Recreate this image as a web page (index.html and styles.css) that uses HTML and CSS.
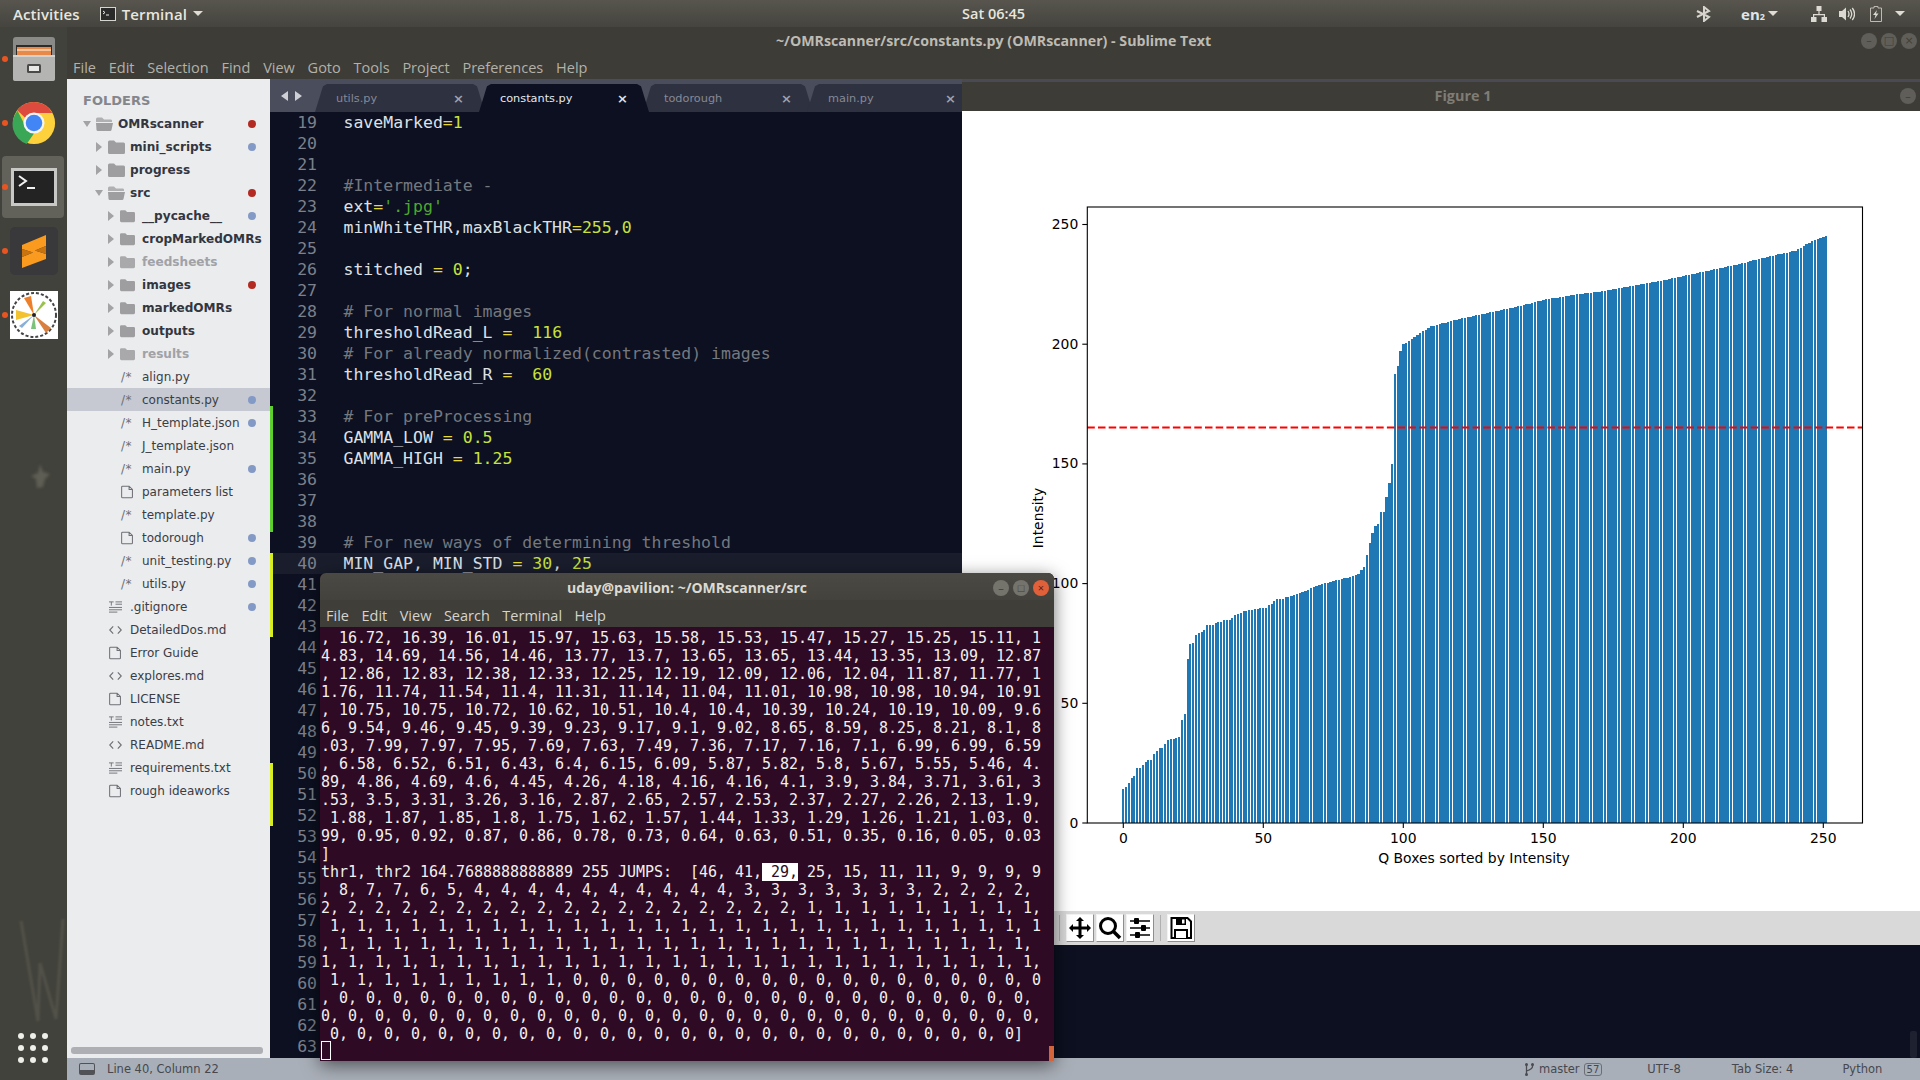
FILE: index.html
```html
<!DOCTYPE html>
<html lang="en">
<head>
<meta charset="utf-8">
<title>OMRscanner desktop</title>
<link rel="stylesheet" href="styles.css">
</head>
<body>
<svg class="defs" width="0" height="0">
  <symbol id="folder" viewBox="0 0 17 14"><path d="M0 2a1.500 1.500 0 0 1 1.500-1.500h4.500l2 2h7.500A1.500 1.500 0 0 1 17 4v8.500a1.500 1.500 0 0 1-1.500 1.500h-14A1.500 1.500 0 0 1 0 12.500z" fill="#9e9ea0"/></symbol>
  <symbol id="folder-open" viewBox="0 0 17 14"><path d="M0 2a1.500 1.500 0 0 1 1.500-1.500h4.500l2 2h7A1.500 1.500 0 0 1 16 4v1H0z" fill="#b0b0b2"/><path d="M0 6h17l-1.500 7a1.500 1.500 0 0 1-1.500 1H2a1.500 1.500 0 0 1-1.500-1z" fill="#9e9ea0"/></symbol>
  <symbol id="file" viewBox="0 0 14 14"><path d="M.7 1.700a1 1 0 0 1 1-1h7l3.600 3.600v8a1 1 0 0 1-1 1H1.700a1 1 0 0 1-1-1z M8.700.7v3.600h3.600" fill="none" stroke="#6d6f75" stroke-width="1.100"/></symbol>
  <symbol id="code" viewBox="0 0 14 14"><path d="M4.500 3L.8 7l3.700 4M9.500 3l3.700 4-3.700 4" fill="none" stroke="#6d6f75" stroke-width="1.200"/></symbol>
  <symbol id="lines" viewBox="0 0 14 14"><path d="M0 1.500h5M2.500 1.500v4M7 1.500h7M7 4h7M0 7.500h14M0 10h14M0 12.500h9" fill="none" stroke="#6d6f75" stroke-width="1"/></symbol>
  <symbol id="tri-r" viewBox="0 0 8 10"><path d="M1 0l6 5-6 5z" fill="#a3a3a5"/></symbol>
  <symbol id="tri-d" viewBox="0 0 8 10"><path d="M0 2h8l-4 6z" fill="#a3a3a5"/></symbol>
</svg>

<header class="topbar">
  <span class="top-title">Activities</span>
  <svg class="top-term" width="16" height="14" viewBox="0 0 16 14"><rect x=".5" y=".5" width="15" height="13" fill="#2a2a2a" stroke="#d5d5d0"/><path d="M3 4l2 1.500-2 1.500M6 8h3" stroke="#eee" fill="none"/></svg>
  <span class="top-title top-app">Terminal</span>
  <span class="caret"></span>
  <span class="top-clock">Sat 06:45</span>
  <div class="tray">
    <svg class="t-bt" width="16" height="16" viewBox="0 0 16 16"><path d="M1 5l12 6-5 4V1l5 4L1 11" fill="none" stroke="#d6d4cc" stroke-width="2"/></svg>
    <span class="t-lang">en<small>2</small></span>
    <span class="caret t-c1"></span>
    <svg class="t-net" width="16" height="16" viewBox="0 0 16 16"><path d="M5.500 0h5v5h-5zM0 11h5.500v5H0zM10.500 11H16v5h-5.500zM7.400 5h1.200v3H14v3h-1.200V9.200H3.200V11H2V8h5.400z" fill="#dcdad2"/></svg>
    <svg class="t-vol" width="16" height="14" viewBox="0 0 16 14"><path d="M0 4h3l4-3.500v13L3 10H0z" fill="#dcdad2"/><path d="M9 4q2 3 0 6M11 2.500q3.500 4.500 0 9M13.300 1q4.500 6 0 12" fill="none" stroke="#dcdad2" stroke-width="1.300"/></svg>
    <svg class="t-bat" width="12" height="16" viewBox="0 0 12 16"><path d="M4 .5h4v1.500h3.500v13.500H.5V2H4z" fill="none" stroke="#bdbbb3"/><path d="M7 4L3 9h2.500L4.500 13l4-5.500H6z" fill="#dcdad2"/></svg>
    <span class="caret t-c2"></span>
  </div>
</header>

<div class="desk">
  <nav class="dock">
    <div class="dock-item">
      <svg width="44" height="44" viewBox="0 0 44 44"><rect x="1" y="0" width="42" height="44" rx="3" fill="#8a8a88"/><rect x="4" y="8" width="36" height="12" fill="#2d2a28"/><rect x="5" y="10" width="34" height="10" fill="#e8894a"/><rect x="5" y="12" width="34" height="2" fill="#f4c59c"/><rect x="1" y="18" width="42" height="26" rx="2" fill="#b4b4b2"/><rect x="1" y="18" width="42" height="2" fill="#d2d2d0"/><rect x="15" y="27" width="14" height="9" rx="1.500" fill="#4a4a48"/><rect x="17" y="29" width="10" height="5" fill="#e8e8e6"/></svg>
      <i class="run"></i>
    </div>
    <div class="dock-item">
      <svg width="44" height="44" viewBox="0 0 48 48"><circle cx="24" cy="24" r="23" fill="#fdd13b"/><path d="M6 10.500L16 30l8 5.500 -8 11.500A23 23 0 0 1 6 10.500z" fill="#3aa757"/><path d="M24 1A23 23 0 0 1 44 13H24L14 18 5.700 10A23 23 0 0 1 24 1z" fill="#dd4b3e"/><circle cx="24" cy="24" r="11.500" fill="#f4f4f4"/><circle cx="24" cy="24" r="9" fill="#4285f4"/></svg>
      <i class="run"></i>
    </div>
    <div class="dock-item active">
      <svg width="46" height="38" viewBox="0 0 46 38"><rect x="0" y="0" width="46" height="38" fill="#c8c8c6"/><rect x="3" y="3" width="40" height="32" fill="#222322"/><path d="M8 8l7 5-7 5" fill="none" stroke="#f2f2f2" stroke-width="2"/><path d="M16 20h8" stroke="#f2f2f2" stroke-width="2"/></svg>
      <i class="run"></i>
    </div>
    <div class="dock-item">
      <svg width="48" height="48" viewBox="0 0 48 48"><rect width="48" height="48" rx="5" fill="#39383a"/><path d="M12 18L36 8v11L25 23.500 36 27v5L12 41V30l11-4.500L12 22z" fill="#fa9a1e"/><path d="M12 22l11 3.500L12 30zM36 19v8L25 23.500z" fill="#c9730f"/></svg>
      <i class="run"></i>
    </div>
    <div class="dock-item">
      <svg width="48" height="48" viewBox="0 0 48 48"><rect width="48" height="48" fill="#fff"/><circle cx="24" cy="24" r="22" fill="none" stroke="#444" stroke-width="2" stroke-dasharray="3 2"/><path d="M24 24L6 19v10z" fill="#f2c230"/><path d="M24 24L14 7l7-2z" fill="#ee7f2a"/><path d="M24 24L41 37l-5 5z" fill="#d98040"/><path d="M24 24l9-14 3 2z" fill="#9ac24a"/><path d="M24 24l-3 14 5 0z" fill="#7cc27a"/><path d="M24 24L9 35l3 2z" fill="#8ab0d8"/><circle cx="24" cy="24" r="2" fill="#222"/></svg>
      <i class="run"></i>
    </div>
    <svg class="ghost-star" width="24" height="28" viewBox="0 0 24 28"><path d="M11 2l3 8 7 2-5 5-2 8-6 1-1-9-5-3 7-3z" fill="#5e5e55"/></svg>
    <svg class="ghost-w" width="48" height="106" viewBox="0 0 48 106"><path d="M3 4l17 100L22 46l16 56L45 2" fill="none" stroke="#56564d" stroke-width="3"/></svg>
    <div class="apps"><i></i><i></i><i></i><i></i><i></i><i></i><i></i><i></i><i></i></div>
  </nav>

  <div class="sublime">
    <div class="win-title">
      <span class="win-name">~/OMRscanner/src/constants.py (OMRscanner) - Sublime Text</span>
      <span class="win-btns"><b class="wb">&#8211;</b><b class="wb">&#9633;</b><b class="wb">&#215;</b></span>
    </div>
    <div class="win-menu">
      <span>File</span><span>Edit</span><span>Selection</span><span>Find</span><span>View</span><span>Goto</span><span>Tools</span><span>Project</span><span>Preferences</span><span>Help</span>
    </div>
    <div class="panes">
      <aside class="side">
        <div class="side-head">FOLDERS</div>
        <div class="row l1 bold"><svg class="arrow"><use href="#tri-d"/></svg><svg class="fold"><use href="#folder-open"/></svg><span>OMRscanner</span><i class="dot red"></i></div>
        <div class="row l2 bold"><svg class="arrow"><use href="#tri-r"/></svg><svg class="fold"><use href="#folder"/></svg><span>mini_scripts</span><i class="dot blue"></i></div>
        <div class="row l2 bold"><svg class="arrow"><use href="#tri-r"/></svg><svg class="fold"><use href="#folder"/></svg><span>progress</span></div>
        <div class="row l2 bold"><svg class="arrow"><use href="#tri-d"/></svg><svg class="fold"><use href="#folder-open"/></svg><span>src</span><i class="dot red"></i></div>
        <div class="row l3 bold"><svg class="arrow"><use href="#tri-r"/></svg><svg class="fold"><use href="#folder"/></svg><span>__pycache__</span><i class="dot blue"></i></div>
        <div class="row l3 bold"><svg class="arrow"><use href="#tri-r"/></svg><svg class="fold"><use href="#folder"/></svg><span>cropMarkedOMRs</span></div>
        <div class="row l3 bold dim"><svg class="arrow"><use href="#tri-r"/></svg><svg class="fold"><use href="#folder"/></svg><span>feedsheets</span></div>
        <div class="row l3 bold"><svg class="arrow"><use href="#tri-r"/></svg><svg class="fold"><use href="#folder"/></svg><span>images</span><i class="dot red"></i></div>
        <div class="row l3 bold"><svg class="arrow"><use href="#tri-r"/></svg><svg class="fold"><use href="#folder"/></svg><span>markedOMRs</span></div>
        <div class="row l3 bold"><svg class="arrow"><use href="#tri-r"/></svg><svg class="fold"><use href="#folder"/></svg><span>outputs</span></div>
        <div class="row l3 bold dim"><svg class="arrow"><use href="#tri-r"/></svg><svg class="fold"><use href="#folder"/></svg><span>results</span></div>
        <div class="row f3"><em class="pyic">/*</em><span>align.py</span></div>
        <div class="row f3 sel"><em class="pyic">/*</em><span>constants.py</span><i class="dot blue"></i></div>
        <div class="row f3"><em class="pyic">/*</em><span>H_template.json</span><i class="dot blue"></i></div>
        <div class="row f3"><em class="pyic">/*</em><span>J_template.json</span></div>
        <div class="row f3"><em class="pyic">/*</em><span>main.py</span><i class="dot blue"></i></div>
        <div class="row f3"><svg class="ic"><use href="#file"/></svg><span>parameters list</span></div>
        <div class="row f3"><em class="pyic">/*</em><span>template.py</span></div>
        <div class="row f3"><svg class="ic"><use href="#file"/></svg><span>todorough</span><i class="dot blue"></i></div>
        <div class="row f3"><em class="pyic">/*</em><span>unit_testing.py</span><i class="dot blue"></i></div>
        <div class="row f3"><em class="pyic">/*</em><span>utils.py</span><i class="dot blue"></i></div>
        <div class="row f2"><svg class="ic"><use href="#lines"/></svg><span>.gitignore</span><i class="dot blue"></i></div>
        <div class="row f2"><svg class="ic"><use href="#code"/></svg><span>DetailedDos.md</span></div>
        <div class="row f2"><svg class="ic"><use href="#file"/></svg><span>Error Guide</span></div>
        <div class="row f2"><svg class="ic"><use href="#code"/></svg><span>explores.md</span></div>
        <div class="row f2"><svg class="ic"><use href="#file"/></svg><span>LICENSE</span></div>
        <div class="row f2"><svg class="ic"><use href="#lines"/></svg><span>notes.txt</span></div>
        <div class="row f2"><svg class="ic"><use href="#code"/></svg><span>README.md</span></div>
        <div class="row f2"><svg class="ic"><use href="#lines"/></svg><span>requirements.txt</span></div>
        <div class="row f2"><svg class="ic"><use href="#file"/></svg><span>rough ideaworks</span></div>
        <div class="side-scroll"></div>
      </aside>

      <section class="editor">
        <div class="tabs">
          <div class="tab-nav"><i class="nav-l"></i><i class="nav-r"></i></div>
          <div class="tab"><span>utils.py</span><b>&#215;</b></div>
          <div class="tab on"><span>constants.py</span><b>&#215;</b></div>
          <div class="tab"><span>todorough</span><b>&#215;</b></div>
          <div class="tab"><span>main.py</span><b>&#215;</b></div>
        </div>
        <div class="code">
          <div class="ln"><b>19</b><code>saveMarked<u>=</u><s>1</s></code></div>
          <div class="ln"><b>20</b></div>
          <div class="ln"><b>21</b></div>
          <div class="ln"><b>22</b><code><q>#Intermediate -</q></code></div>
          <div class="ln"><b>23</b><code>ext<u>=</u><var>'.jpg'</var></code></div>
          <div class="ln"><b>24</b><code>minWhiteTHR,maxBlackTHR<u>=</u><s>255</s>,<s>0</s></code></div>
          <div class="ln"><b>25</b></div>
          <div class="ln"><b>26</b><code>stitched <u>=</u> <s>0</s>;</code></div>
          <div class="ln"><b>27</b></div>
          <div class="ln"><b>28</b><code><q># For normal images</q></code></div>
          <div class="ln"><b>29</b><code>thresholdRead_L <u>=</u>  <s>116</s></code></div>
          <div class="ln"><b>30</b><code><q># For already normalized(contrasted) images</q></code></div>
          <div class="ln"><b>31</b><code>thresholdRead_R <u>=</u>  <s>60</s></code></div>
          <div class="ln"><b>32</b></div>
          <div class="ln gr"><b>33</b><code><q># For preProcessing</q></code></div>
          <div class="ln gr"><b>34</b><code>GAMMA_LOW <u>=</u> <s>0.5</s></code></div>
          <div class="ln gr"><b>35</b><code>GAMMA_HIGH <u>=</u> <s>1.25</s></code></div>
          <div class="ln gr"><b>36</b></div>
          <div class="ln gr"><b>37</b></div>
          <div class="ln gr"><b>38</b></div>
          <div class="ln"><b>39</b><code><q># For new ways of determining threshold</q></code></div>
          <div class="ln ye cur"><b>40</b><code>MIN_GAP, MIN_STD <u>=</u> <s>30</s>, <s>25</s></code></div>
          <div class="ln ye"><b>41</b></div>
          <div class="ln ye"><b>42</b></div>
          <div class="ln ye"><b>43</b></div>
          <div class="ln"><b>44</b></div>
          <div class="ln"><b>45</b></div>
          <div class="ln"><b>46</b></div>
          <div class="ln"><b>47</b></div>
          <div class="ln"><b>48</b></div>
          <div class="ln"><b>49</b></div>
          <div class="ln ye"><b>50</b></div>
          <div class="ln ye"><b>51</b></div>
          <div class="ln ye"><b>52</b></div>
          <div class="ln"><b>53</b></div>
          <div class="ln"><b>54</b></div>
          <div class="ln"><b>55</b></div>
          <div class="ln"><b>56</b></div>
          <div class="ln"><b>57</b></div>
          <div class="ln"><b>58</b></div>
          <div class="ln"><b>59</b></div>
          <div class="ln"><b>60</b></div>
          <div class="ln"><b>61</b></div>
          <div class="ln"><b>62</b></div>
          <div class="ln"><b>63</b></div>
        </div>
      </section>

      <section class="figure">
        <div class="fig-title"><span>Figure 1</span><b class="wb fig-min">&#8211;</b></div>
        <div class="fig-canvas">
          <svg id="chart" width="958" height="800" viewBox="0 0 958 800"></svg>
        </div>
        <div class="fig-tools">
          <i class="sep"></i>
          <span class="tool"><svg width="24" height="24" viewBox="0 0 24 24"><path d="M12 1l4 4h-2.500v5.500H19V8l4 4-4 4v-2.500h-5.500V19H16l-4 4-4-4h2.500v-5.500H5V16l-4-4 4-4v2.500h5.500V5H8z" fill="#000"/></svg></span>
          <span class="tool"><svg width="24" height="24" viewBox="0 0 24 24"><circle cx="10" cy="10" r="7.500" fill="none" stroke="#000" stroke-width="3"/><path d="M15.500 15.500L22 22" stroke="#000" stroke-width="3.500"/></svg></span>
          <span class="tool"><svg width="24" height="24" viewBox="0 0 24 24"><path d="M2 5h20M2 12h20M2 19h20" stroke="#000" stroke-width="1.500"/><rect x="6" y="2" width="5" height="6" rx="1" fill="#000"/><rect x="13" y="9" width="5" height="6" rx="1" fill="#000"/><rect x="7" y="16" width="5" height="6" rx="1" fill="#000"/></svg></span>
          <i class="sep sep2"></i>
          <span class="tool"><svg width="24" height="24" viewBox="0 0 24 24"><path d="M2.500 2h16l3.500 3.500v16.500h-19.500z" fill="#fff" stroke="#000" stroke-width="2"/><path d="M7 2h10v7H7z" fill="#000"/><rect x="13" y="3.500" width="2.500" height="4" fill="#fff"/><path d="M6 22v-8h12v8" fill="#fff" stroke="#000" stroke-width="2"/></svg></span>
        </div>
        <div class="fig-rest"><i class="mini-scroll"></i></div>
      </section>
    </div>
    <footer class="status">
      <span class="st-panel"></span>
      <span class="st-pos">Line 40, Column 22</span>
      <svg class="st-branch" width="9" height="13" viewBox="0 0 9 13"><path d="M1.500 1v11M7.500 1v2.500Q7.500 6 1.500 8" fill="none" stroke="#4a4c52" stroke-width="1.300"/><circle cx="1.500" cy="1.500" r="1.500" fill="#4a4c52"/><circle cx="7.500" cy="1.500" r="1.500" fill="#4a4c52"/><circle cx="1.500" cy="11.500" r="1.500" fill="#4a4c52"/></svg>
      <span class="st-master">master</span>
      <span class="st-badge">57</span>
      <span class="st-enc">UTF-8</span>
      <span class="st-tab">Tab Size: 4</span>
      <span class="st-lang">Python</span>
    </footer>
  </div>
</div>

<div class="terminal">
  <div class="term-title"><span>uday@pavilion: ~/OMRscanner/src</span>
    <span class="term-btns"><b class="tb">&#8211;</b><b class="tb">&#9633;</b><b class="tb close">&#215;</b></span>
  </div>
  <div class="term-menu"><span>File</span><span>Edit</span><span>View</span><span>Search</span><span>Terminal</span><span>Help</span></div>
  <pre class="term-body">, 16.72, 16.39, 16.01, 15.97, 15.63, 15.58, 15.53, 15.47, 15.27, 15.25, 15.11, 1
4.83, 14.69, 14.56, 14.46, 13.77, 13.7, 13.65, 13.65, 13.44, 13.35, 13.09, 12.87
, 12.86, 12.83, 12.38, 12.33, 12.25, 12.19, 12.09, 12.06, 12.04, 11.87, 11.77, 1
1.76, 11.74, 11.54, 11.4, 11.31, 11.14, 11.04, 11.01, 10.98, 10.98, 10.94, 10.91
, 10.75, 10.75, 10.72, 10.62, 10.51, 10.4, 10.4, 10.39, 10.24, 10.19, 10.09, 9.6
6, 9.54, 9.46, 9.45, 9.39, 9.23, 9.17, 9.1, 9.02, 8.65, 8.59, 8.25, 8.21, 8.1, 8
.03, 7.99, 7.97, 7.95, 7.69, 7.63, 7.49, 7.36, 7.17, 7.16, 7.1, 6.99, 6.99, 6.59
, 6.58, 6.52, 6.51, 6.43, 6.4, 6.15, 6.09, 5.87, 5.82, 5.8, 5.67, 5.55, 5.46, 4.
89, 4.86, 4.69, 4.6, 4.45, 4.26, 4.18, 4.16, 4.16, 4.1, 3.9, 3.84, 3.71, 3.61, 3
.53, 3.5, 3.31, 3.26, 3.16, 2.87, 2.65, 2.57, 2.53, 2.37, 2.27, 2.26, 2.13, 1.9,
 1.88, 1.87, 1.85, 1.8, 1.75, 1.62, 1.57, 1.44, 1.33, 1.29, 1.26, 1.21, 1.03, 0.
99, 0.95, 0.92, 0.87, 0.86, 0.78, 0.73, 0.64, 0.63, 0.51, 0.35, 0.16, 0.05, 0.03
]
thr1, thr2 164.7688888888889 255 JUMPS:  [46, 41,<mark> 29,</mark> 25, 15, 11, 11, 9, 9, 9, 9
, 8, 7, 7, 6, 5, 4, 4, 4, 4, 4, 4, 4, 4, 4, 4, 3, 3, 3, 3, 3, 3, 3, 2, 2, 2, 2, 
2, 2, 2, 2, 2, 2, 2, 2, 2, 2, 2, 2, 2, 2, 2, 2, 2, 2, 1, 1, 1, 1, 1, 1, 1, 1, 1,
 1, 1, 1, 1, 1, 1, 1, 1, 1, 1, 1, 1, 1, 1, 1, 1, 1, 1, 1, 1, 1, 1, 1, 1, 1, 1, 1
, 1, 1, 1, 1, 1, 1, 1, 1, 1, 1, 1, 1, 1, 1, 1, 1, 1, 1, 1, 1, 1, 1, 1, 1, 1, 1, 
1, 1, 1, 1, 1, 1, 1, 1, 1, 1, 1, 1, 1, 1, 1, 1, 1, 1, 1, 1, 1, 1, 1, 1, 1, 1, 1,
 1, 1, 1, 1, 1, 1, 1, 1, 1, 0, 0, 0, 0, 0, 0, 0, 0, 0, 0, 0, 0, 0, 0, 0, 0, 0, 0
, 0, 0, 0, 0, 0, 0, 0, 0, 0, 0, 0, 0, 0, 0, 0, 0, 0, 0, 0, 0, 0, 0, 0, 0, 0, 0, 
0, 0, 0, 0, 0, 0, 0, 0, 0, 0, 0, 0, 0, 0, 0, 0, 0, 0, 0, 0, 0, 0, 0, 0, 0, 0, 0,
 0, 0, 0, 0, 0, 0, 0, 0, 0, 0, 0, 0, 0, 0, 0, 0, 0, 0, 0, 0, 0, 0, 0, 0, 0, 0]</pre>
  <i class="term-cursor"></i>
  <i class="term-slider"></i>
</div>
<script src="chart.js"></script>
</body>
</html>
```
FILE: styles.css
```css
* { box-sizing: border-box; }
html, body { margin: 0; height: 100%; }
body {
  width: 1920px; height: 1080px; overflow: hidden; position: relative;
  display: flex; flex-direction: column;
  font-family: "DejaVu Sans", sans-serif; background: #0c1020;
}
.defs { position: absolute; }

/* top bar */
.topbar {
  height: 27px; flex: none; display: flex; align-items: center; position: relative;
  background: linear-gradient(#57554e, #45443e);
  font-family: "Open Sans", sans-serif; color: #e8e6df; font-size: 15px;
}
.top-title { font-weight: 600; margin-left: 13px; letter-spacing: .1px; }
.top-term { margin-left: 20px; }
.top-app { margin-left: 6px; }
.caret { width: 0; height: 0; border: 5px solid transparent; border-top: 5px solid #dedcd4; border-bottom: 0; margin-left: 6px; }
.top-clock { position: absolute; left: 962px; font-weight: 600; font-size: 14.500px; }
.tray { margin-left: auto; display: flex; align-items: center; }
.t-bt { margin-right: 29px; }
.t-lang { font-weight: 700; font-size: 15px; color: #dfe4ea; margin-right: 0; }
.t-lang small { font-size: 9px; }
.t-c1 { margin-left: 3px; margin-right: 33px; }
.t-vol { margin-left: 12px; }
.t-bat { margin-left: 15px; }
.t-c2 { margin-left: 13px; margin-right: 15px; }

.desk { flex: 1; display: flex; min-height: 0; }

/* dock */
.dock { width: 67px; flex: none; background: #42423c; display: flex; flex-direction: column; position: relative; }
.dock-item { height: 64px; flex: none; display: flex; align-items: center; justify-content: center; position: relative; }
.dock-item.active::before {
  content: ""; position: absolute; left: 2px; top: 1px; width: 62px; height: 62px;
  background: #62625b; border-radius: 4px;
}
.dock-item svg { position: relative; }
.run { position: absolute; left: 2px; top: 29px; width: 6px; height: 6px; border-radius: 50%; background: #e95420; }
.ghost-star { position: absolute; left: 29px; top: 435px; filter: blur(1.5px); }
.ghost-w { position: absolute; left: 18px; top: 890px; filter: blur(1.2px); opacity: .8; }
.apps { margin-top: auto; margin-left: 18px; margin-bottom: 17px; display: grid; grid-template-columns: repeat(3, 6px); gap: 6px; }
.apps i { width: 6px; height: 6px; border-radius: 50%; background: #eeeeea; }

/* sublime */
.sublime { flex: 1; min-width: 0; display: flex; flex-direction: column; background: #3d3c37; }
.win-title { height: 27px; flex: none; display: flex; align-items: center; justify-content: center; position: relative; }
.win-name { font-family: "Open Sans", sans-serif; font-weight: 700; font-size: 14.200px; color: #bdbbb3; }
.win-btns { position: absolute; right: 3px; top: 6px; display: flex; gap: 4px; }
.wb { width: 16px; height: 16px; border-radius: 50%; background: #5f5e58; color: #3f3e39; font-size: 11px; line-height: 16px; text-align: center; font-weight: 400; }
.win-menu { height: 25px; flex: none; display: flex; align-items: center; gap: 12.800px; padding: 1px 0 0 6px; font-family: "Open Sans", sans-serif; font-size: 14.500px; color: #b3b1a9; }
.panes { flex: 1; display: flex; min-height: 0; }

/* sidebar */
.side { width: 203px; flex: none; background: #ebecee; position: relative; color: #3a3d45; font-size: 12px; overflow: hidden; }
.side-head { height: 33px; padding: 14px 0 0 16px; font-weight: 700; font-size: 13px; color: #84868c; line-height: 16px; }
.row { height: 23px; display: flex; align-items: center; white-space: nowrap; padding-right: 14px; }
.row svg { flex: none; }
.bold { font-weight: 700; color: #33363e; font-size: 12.100px; }
.dim { color: #a0a2a8; }
.dim .fold { opacity: .85; }
.l1 { padding-left: 16px; }
.l2 { padding-left: 28px; }
.l3 { padding-left: 40px; }
.arrow { width: 8px; height: 10px; margin-right: 5px; }
.fold { width: 17px; height: 14px; margin-right: 5px; }
.l3 .fold { width: 15px; margin-right: 7px; }
.f3 { padding-left: 54px; }
.f2 { padding-left: 42px; }
.f3 .ic, .f2 .ic { width: 13px; height: 14px; margin-right: 8px; }
.pyic { width: 13px; margin-right: 8px; flex: none; font-size: 12px; color: #6d6f75; font-style: normal; letter-spacing: .5px; }
.sel { background: #c6c9d2; }
.dot { margin-left: auto; width: 8px; height: 8px; border-radius: 50%; flex: none; }
.red { background: #b32a22; }
.blue { background: #8399c6; }
.side-scroll { position: absolute; left: 4px; right: 7px; bottom: 4px; height: 7px; border-radius: 3px; background: #aeaeb5; }

/* editor */
.editor { width: 692px; flex: none; display: flex; flex-direction: column; background: #0c1020; min-height: 0; }
.tabs { height: 33px; flex: none; background: #4a4d5c; display: flex; align-items: flex-end; position: relative; overflow: hidden; padding-left: 45px; }
.tab-nav { position: absolute; left: 11px; top: 12px; display: flex; gap: 7px; }
.nav-l, .nav-r { width: 0; height: 0; border: 5px solid transparent; border-left-width: 0; border-right: 7px solid #cfd0d6; }
.nav-r { border-right-width: 0; border-left: 7px solid #cfd0d6; border-right-color: transparent; }
.tab {
  width: 170px; height: 28px; flex: none; display: flex; align-items: center; justify-content: space-between;
  padding: 0 21px; margin-right: -6px; background: #2e3140; color: #858996; font-size: 11.300px;
  clip-path: polygon(0 100%, 8px 8%, 12px 0, calc(100% - 12px) 0, calc(100% - 8px) 8%, 100% 100%);
}
.tab b { font-size: 13px; color: #9ea2ae; font-weight: 700; }
.tab.on { background: #0c1020; color: #e6e8ee; position: relative; z-index: 1; }
.tab.on b { color: #dfe1e8; }
.code { flex: 1; overflow: hidden; font-family: "DejaVu Sans Mono", monospace; font-size: 16.500px; line-height: 21px; }
.ln { height: 21px; display: flex; border-left: 3px solid transparent; white-space: pre; color: #dde0e6; }
.ln b { width: 44px; flex: none; text-align: right; margin-right: 26.500px; font-weight: 400; color: #7c808b; }
.ln code { font: inherit; }
.ln u { text-decoration: none; color: #e6d93a; }
.ln s { text-decoration: none; color: #c9e23c; }
.ln q { quotes: none; color: #74787f; }
.ln var { font-style: normal; color: #4ea82e; }
.gr { border-left-color: #5cd02e; }
.ye { border-left-color: #d8ee20; }
.cur { background: #1a1d2c; }

/* figure */
.figure { flex: 1; min-width: 0; display: flex; flex-direction: column; background: #0c1020; position: relative; }
.fig-title { height: 32px; flex: none; border-top: 3px solid #4a4a55; background: #3d3c37; display: flex; align-items: center; justify-content: center; position: relative; color: #7f7d76; font-family: "Open Sans", sans-serif; font-weight: 700; font-size: 14.400px; padding-bottom: 2px; }
.fig-title span { margin-left: 44px; }
.fig-min { position: absolute; right: 4px; top: 6px; color: #3f3e39; }
.fig-canvas { height: 800px; flex: none; background: #fff; }
#chart { display: block; }
.fig-tools { height: 34px; flex: none; background: #d9d9d9; display: flex; align-items: center; padding-left: 97px; gap: 2px; }
.sep { width: 1px; height: 26px; background: #b0b0b0; margin: 0 4px 0 0; }
.sep2 { margin: 0 4px 0 4px; }
.tool { width: 28px; height: 28px; background: #fff; border: 1px solid #f2f2f2; border-right-color: #8e8e8e; border-bottom-color: #8e8e8e; display: flex; align-items: center; justify-content: center; }
.fig-rest { flex: 1; position: relative; }
.mini-scroll { position: absolute; right: 3px; top: 86px; width: 7px; height: 27px; border-radius: 2px; background: #1d2130; }

/* status */
.status { height: 22px; flex: none; background: #a9afb8; display: flex; align-items: center; color: #46484e; font-size: 11.500px; position: relative; white-space: nowrap; }
.st-panel { width: 16px; height: 12px; margin-left: 12px; border: 1px solid #505258; border-bottom-width: 5px; border-radius: 2px; flex: none; }
.st-pos { margin-left: 12px; width: 110px; flex: none; }
.st-branch { margin-left: 1308px; flex: none; }
.st-master { margin-left: 5px; }
.st-badge { margin-left: 4px; border: 1px solid #6b6e75; border-radius: 3px; font-size: 10px; padding: 0 2px; line-height: 11px; }
.st-enc { margin-left: 45px; }
.st-tab { margin-left: 51px; }
.st-lang { margin-left: 49px; }

/* terminal */
.terminal { position: absolute; left: 320px; top: 573px; width: 734px; height: 488px; background: #2f0a24; border-radius: 6px 6px 0 0; box-shadow: 0 4px 18px rgba(0,0,0,.55); overflow: hidden; }
.term-title { height: 27px; position: relative; display: flex; align-items: center; justify-content: center; padding-top: 2px; background: linear-gradient(#4a4944, #43423d); font-family: "Open Sans", sans-serif; font-weight: 700; font-size: 14px; color: #dcdad2; }
.term-btns { position: absolute; right: 5px; top: 7px; display: flex; gap: 4px; }
.tb { width: 16px; height: 16px; border-radius: 50%; background: #74736c; color: #3f3e39; font-size: 11px; line-height: 16px; text-align: center; font-weight: 400; }
.close { background: #e0603a; color: #522; }
.term-menu { height: 27px; display: flex; align-items: center; gap: 12.500px; padding: 3px 0 0 6px; background: #3f3e39; font-family: "Open Sans", sans-serif; font-size: 14.500px; color: #d6d4cc; }
.term-body { margin: 0; padding: 2px 0 0 1px; font-family: "DejaVu Sans Mono", monospace; font-size: 15px; line-height: 18px; letter-spacing: -.03px; color: #f0f0ee; }
.term-body mark { background: #fff; color: #2f0a24; }
.term-cursor { position: absolute; left: 1px; bottom: 1px; width: 10px; height: 19px; border: 1px solid #fff; }
.term-slider { position: absolute; right: 0; bottom: 0; width: 5px; height: 15px; background: #d2663a; }
```
FILE: chart.js
```js
var head = [14.2,15,16.7,18.8,19.6,23,23,24.2,25.5,26.3,26.3,28.8,30,31.3,31.3,33,34.7,35,35,35.5,36,43,45.5,68.5,74.8,75.2,78.5,79.4,79.8,80.6,82.7,82.7,82.7,83.4,83.8,83.9,84.8,85,85,85.6,86.9,87.3,87.7,88.6,88.6,89,89,89.4,89.4,89.8,89.8,89.8,91,91.5,92.7,93.6,93.6,93.6,94.3];
var knots = [[59,94.5],[65,97],[70,99.5],[75,101],[80,102.5],[84,104],[86,107],[88,117],[89,121],[90,124],[91,125],[92,130],[93,130],[94,136],[95,142],[96,150],[97,187.5],[98,191],[99,197],[100,200],[101,200.5],[105,204],[110,207.5],[120,210.5],[130,213],[140,215.5],[150,218.5],[160,220.5],[170,222],[180,224],[190,226],[200,228.5],[210,231],[220,233.5],[230,236.5],[240,239],[246,243],[251,245]];
function val(i) {
  if (i < head.length) return head[i];
  for (var k = 1; k < knots.length; k++) {
    if (i <= knots[k][0]) {
      var a = knots[k - 1], b = knots[k];
      return a[1] + (b[1] - a[1]) * (i - a[0]) / (b[0] - a[0]);
    }
  }
  return 245;
}
var X0 = 161.3, XS = 2.8, Y0 = 712, YS = 2.394;
var L = 125.3, R = 900.5, T = 96;
var out = [];
var bars = "";
for (var i = 0; i < 252; i++) {
  var w = i < 60 ? 2.0 : 2.4;
  var x0 = X0 + XS * i - 1.12;
  var left = Math.round(x0), right = Math.round(x0 + w);
  var h = Math.round(val(i) * YS);
  bars += "M" + left + " " + Y0 + "H" + right + "V" + (Y0 - h) + "H" + left + "z";
}
out.push('<path d="' + bars + '" fill="#1f77b4" shape-rendering="crispEdges"/>');
out.push('<line x1="' + L + '" x2="' + R + '" y1="316.5" y2="316.5" stroke="#f00" stroke-width="2" stroke-dasharray="7.500 3.200"/>');
out.push('<rect x="' + L + '" y="' + T + '" width="' + (R - L) + '" height="' + (Y0 - T) + '" fill="none" stroke="#000" stroke-width="1.100"/>');
var txt = 'font-family="DejaVu Sans" font-size="13.900" fill="#000"';
for (var k = 0; k <= 5; k++) {
  var tx = X0 + 140 * k, ty = Y0 - 119.7 * k;
  out.push('<line x1="' + tx + '" x2="' + tx + '" y1="' + Y0 + '" y2="' + (Y0 + 5) + '" stroke="#000" stroke-width="1.100"/>');
  out.push('<text x="' + tx + '" y="' + (Y0 + 20) + '" text-anchor="middle" ' + txt + '>' + (k * 50) + '</text>');
  out.push('<line x1="' + (L - 5) + '" x2="' + L + '" y1="' + ty + '" y2="' + ty + '" stroke="#000" stroke-width="1.100"/>');
  out.push('<text x="' + (L - 9) + '" y="' + (ty + 4.5) + '" text-anchor="end" ' + txt + '>' + (k * 50) + '</text>');
}
out.push('<text x="512" y="752" text-anchor="middle" ' + txt + '>Q Boxes sorted by Intensity</text>');
out.push('<text transform="translate(81 407) rotate(-90)" text-anchor="middle" ' + txt + '>Intensity</text>');
document.getElementById("chart").innerHTML = out.join("");
```
